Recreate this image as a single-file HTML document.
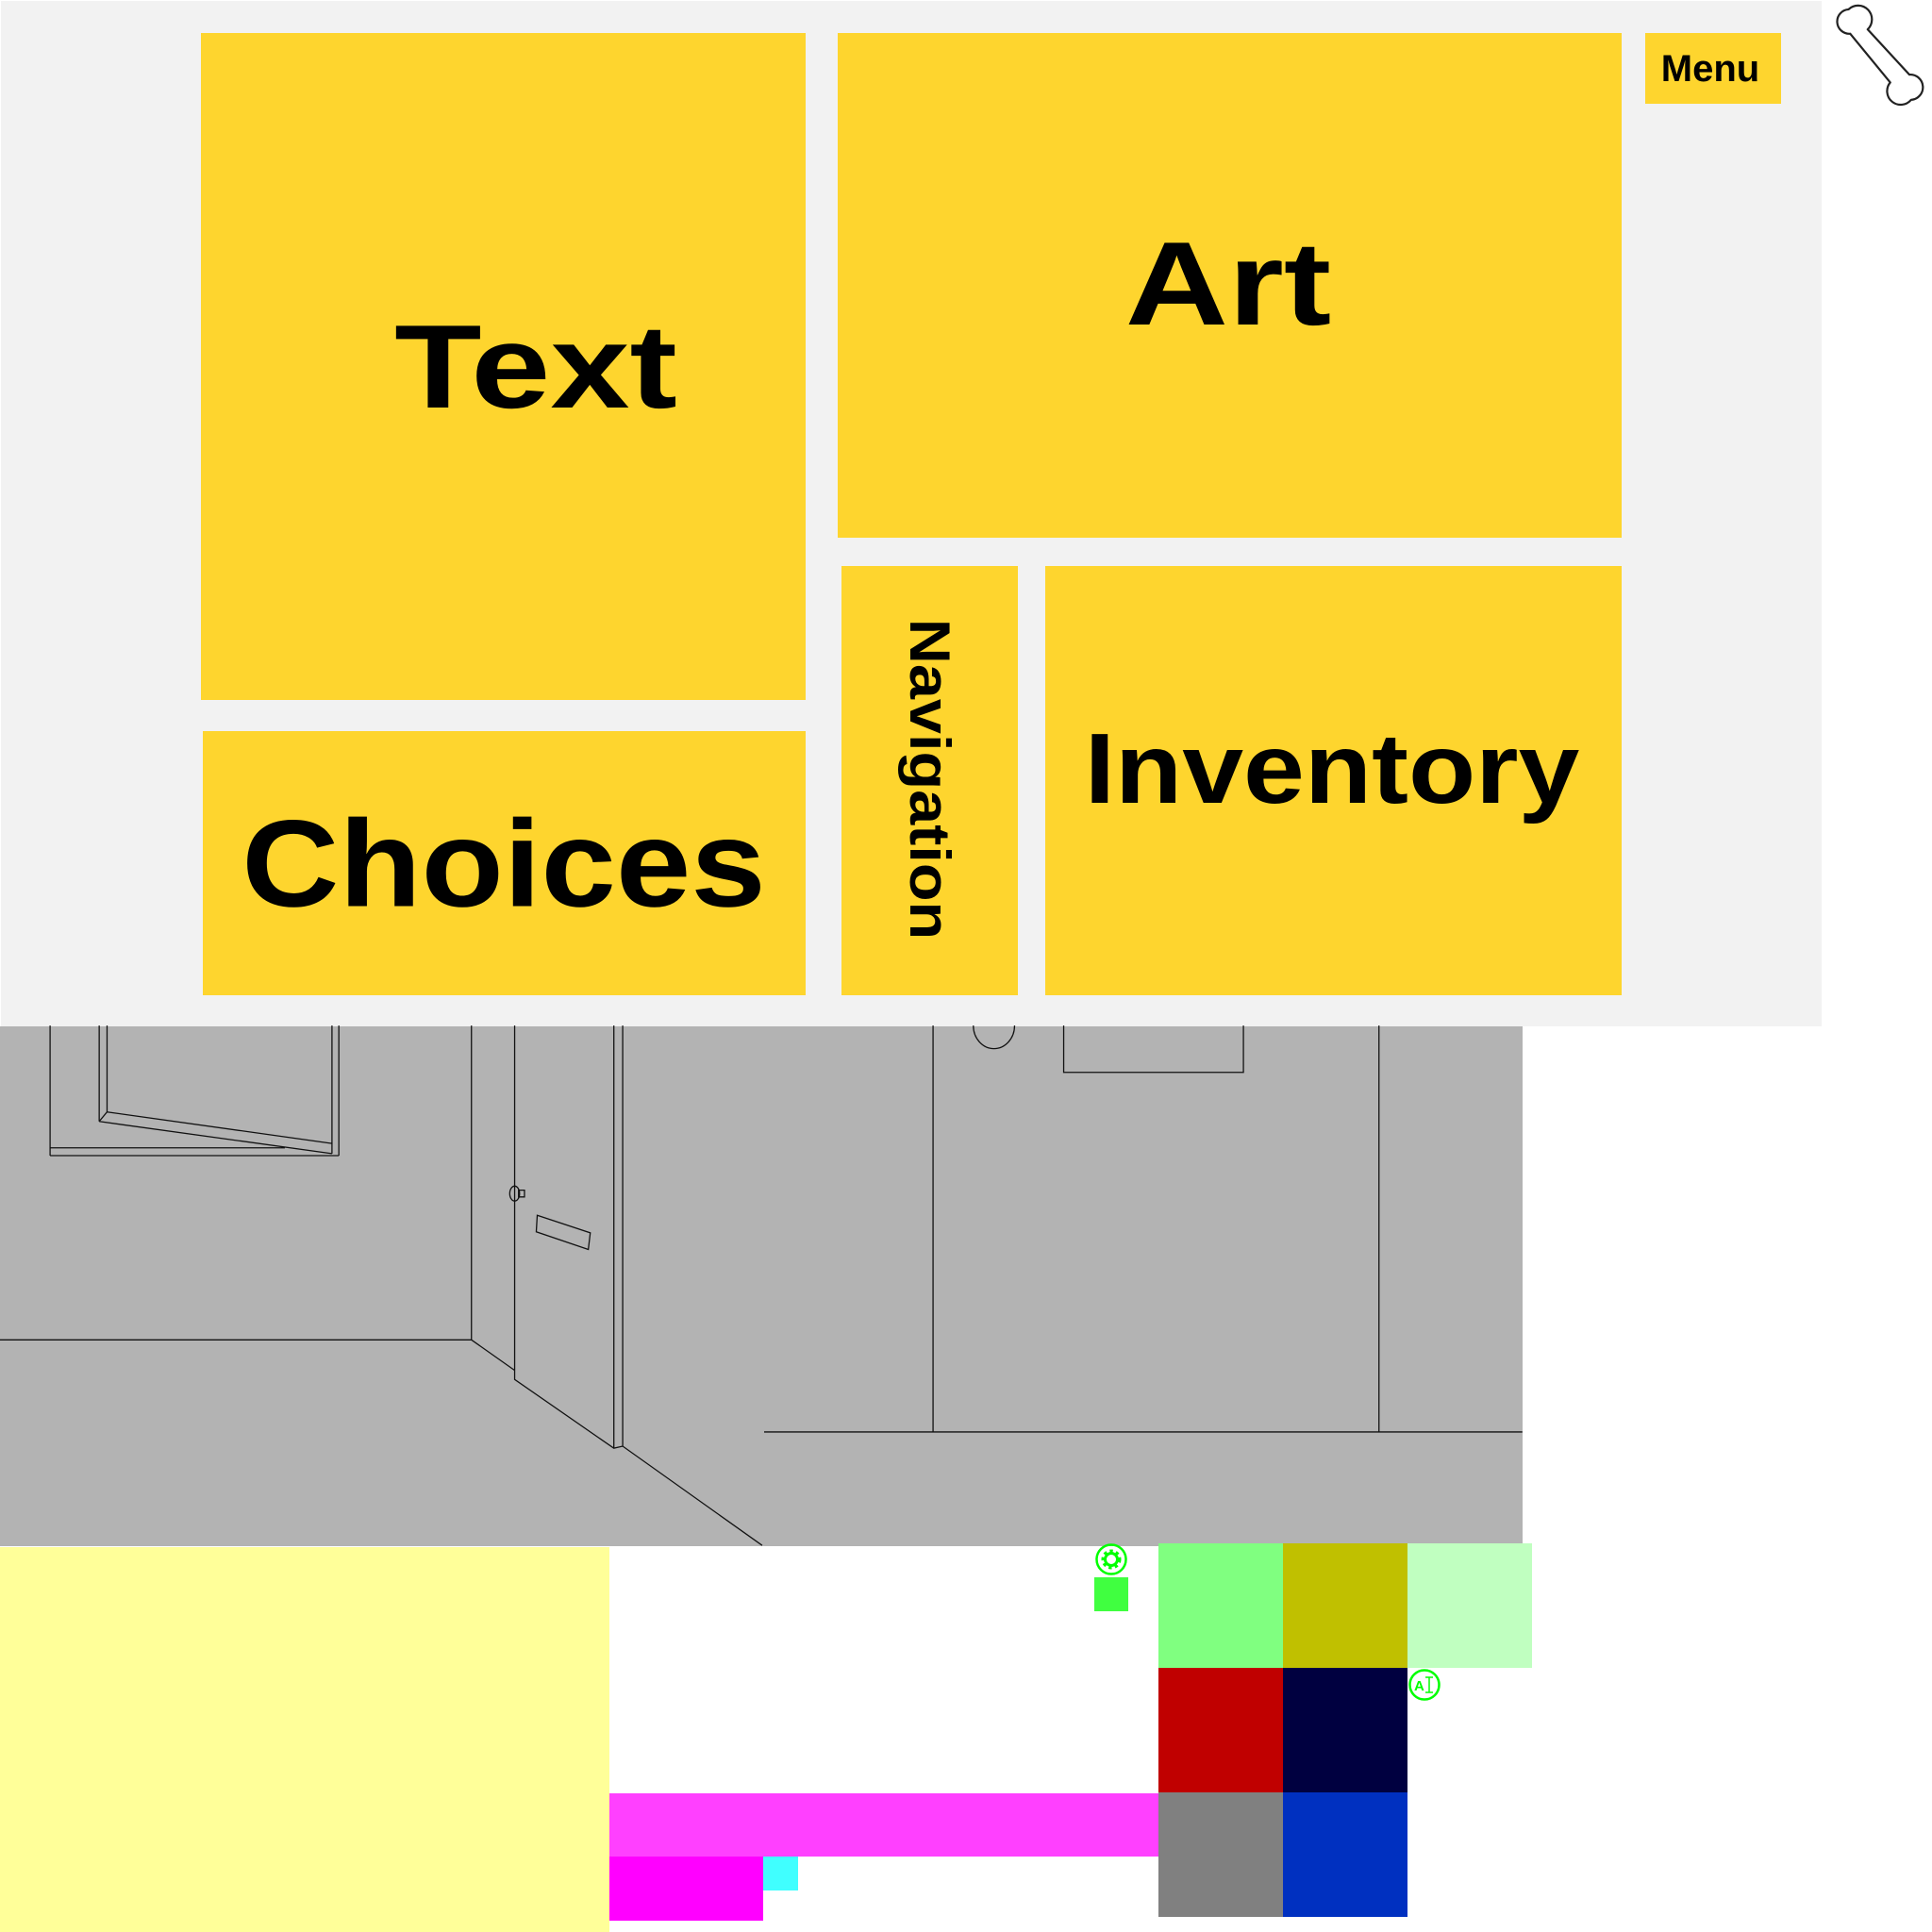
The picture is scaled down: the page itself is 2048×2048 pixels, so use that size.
<!DOCTYPE html>
<html><head><meta charset="utf-8"><style>
html,body{margin:0;padding:0;width:2048px;height:2048px;background:#fff;overflow:hidden;position:relative;font-family:"Liberation Sans",Arial,sans-serif}
.a{position:absolute}
.y{position:absolute;background:#fed52e}
.t{position:absolute;font-weight:bold;color:#000;white-space:nowrap;line-height:1;transform-origin:center center}
</style></head><body>
<div class="a" style="left:1px;top:1px;width:1930px;height:1087px;background:#f2f2f2"></div>
<div class="y" style="left:213px;top:35px;width:641px;height:707px"></div>
<div class="y" style="left:888px;top:35px;width:831px;height:535px"></div>
<div class="y" style="left:1744px;top:35px;width:144px;height:75px"></div>
<div class="y" style="left:215px;top:775px;width:639px;height:280px"></div>
<div class="y" style="left:892px;top:600px;width:187px;height:455px"></div>
<div class="y" style="left:1108px;top:600px;width:611px;height:455px"></div>

<div class="t" style="left:568px;top:389px;font-size:126px;transform:translate(-50%,-50%) scaleX(1.2)">Text</div>
<div class="t" style="left:1302px;top:301px;font-size:126px;transform:translate(-50%,-50%) scaleX(1.2)">Art</div>
<div class="t" style="left:534px;top:915px;font-size:131px;transform:translate(-50%,-50%) scaleX(1.09)">Choices</div>
<div class="t" style="left:1412px;top:815px;font-size:106px;transform:translate(-50%,-50%) scaleX(1.10)">Inventory</div>
<div class="t" style="left:985px;top:826px;font-size:60px;transform:translate(-50%,-50%) rotate(90deg) scaleX(1.11)">Navigation</div>
<div class="t" style="left:1813px;top:73px;font-size:40px;transform:translate(-50%,-50%)">Menu</div>

<svg class="a" style="left:1930px;top:0" width="118" height="125" viewBox="0 0 128 130">
<path d="M34 36 L80 92 A14 14 0 1 0 104 112 A13 13 0 1 0 102 83 L54 31 A14 14 0 1 0 32 8 A14 14 0 1 0 34 36 Z" fill="#fff" stroke="#222" stroke-width="2.4" stroke-linejoin="round"/>
</svg>

<div class="a" style="left:0;top:1088px;width:1614px;height:551px;background:#b3b3b3"></div>
<svg class="a" style="left:0;top:1080px" width="1620" height="560" viewBox="0 0 1556 1560" preserveAspectRatio="none">
<g fill="none" stroke="#111" stroke-width="1.3">
<path vector-effect="non-scaling-stroke" d="M51 20V404M345 20V404M338 20V398M101 20V303M109 20V275M51 381H290M51 404H345M109 275L338 368M101 303L338 398M101 303L109 275"/>
<path vector-effect="non-scaling-stroke" d="M0 948H480L524 1038M480 20V948M524 20V1065L625 1268L634 1262L776 1555M625 20V1268M634 20V1262"/>
<ellipse vector-effect="non-scaling-stroke" cx="524" cy="516" rx="5" ry="22"/>
<rect vector-effect="non-scaling-stroke" x="528" y="506" width="6" height="20"/>
<path vector-effect="non-scaling-stroke" d="M547 580L601 632L599 681L546 629Z"/>
<path vector-effect="non-scaling-stroke" d="M950 20V1220M1404 20V1220M778 1220H1550M1083 20V158H1266V20M991 20A21 68 0 0 0 1033 20"/>
</g></svg>

<div class="a" style="left:0;top:1640px;width:646px;height:408px;background:#ffff99"></div>
<div class="a" style="left:646px;top:1901px;width:582px;height:67px;background:#ff40ff"></div>
<div class="a" style="left:646px;top:1968px;width:163px;height:68px;background:#ff00ff"></div>
<div class="a" style="left:809px;top:1968px;width:37px;height:36px;background:#40ffff"></div>

<div class="a" style="left:1228px;top:1636px;width:132px;height:132px;background:#80ff80"></div>
<div class="a" style="left:1360px;top:1636px;width:132px;height:132px;background:#c0c000"></div>
<div class="a" style="left:1492px;top:1636px;width:132px;height:132px;background:#c0ffc0"></div>
<div class="a" style="left:1228px;top:1768px;width:132px;height:132px;background:#c00000"></div>
<div class="a" style="left:1360px;top:1768px;width:132px;height:132px;background:#000040"></div>
<div class="a" style="left:1228px;top:1900px;width:132px;height:132px;background:#808080"></div>
<div class="a" style="left:1360px;top:1900px;width:132px;height:132px;background:#0030c0"></div>

<svg class="a" style="left:1160px;top:1635px" width="36" height="36" viewBox="0 0 36 36">
<circle cx="18" cy="18" r="15.5" fill="none" stroke="#00ff00" stroke-width="2.5"/>
<circle cx="18" cy="18" r="8" fill="none" stroke="#00ff00" stroke-width="5" stroke-dasharray="3 3"/>
<circle cx="18" cy="18" r="6.5" fill="none" stroke="#00ff00" stroke-width="3"/>
</svg>
<div class="a" style="left:1160px;top:1672px;width:36px;height:36px;background:#40ff40"></div>
<svg class="a" style="left:1492px;top:1768px" width="36" height="36" viewBox="0 0 36 36">
<circle cx="18" cy="18" r="15.5" fill="none" stroke="#00ff00" stroke-width="2.5"/>
<text x="7" y="24" font-family="Liberation Sans,sans-serif" font-weight="bold" font-size="15" fill="#00ff00">A</text>
<path d="M19 10H27M23 10V26M19 26H27" stroke="#00ff00" stroke-width="1.5" fill="none"/>
</svg>
</body></html>
